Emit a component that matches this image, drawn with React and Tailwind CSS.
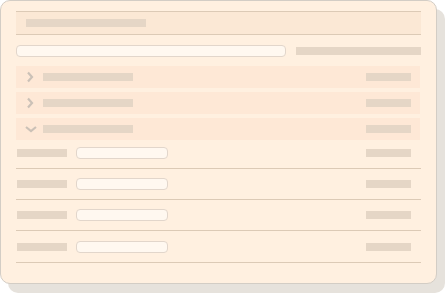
import React from "react";

const Bar = ({ className = "" }) => (
  <div className={`h-[8px] bg-[#e5d6c6] ${className}`} />
);

const ChevronRight = () => (
  <svg width="8" height="12" viewBox="0 0 8 12" fill="none">
    <path d="M2 1.5 L6 6 L2 10.5" stroke="#cbc1b7" strokeWidth="2.2" />
  </svg>
);

const ChevronDown = () => (
  <svg width="12" height="8" viewBox="0 0 12 8" fill="none">
    <path d="M1 2 L6 6 L11 2" stroke="#cbc1b7" strokeWidth="2.2" />
  </svg>
);

const App = () => {
  const sections = [{ open: false }, { open: false }, { open: true }];
  const rows = [1, 2, 3, 4];

  return (
    <div className="w-[445px] h-[293px] bg-white font-['Liberation_Sans',sans-serif]">
      <div className="w-[437px] h-[284px] rounded-[10px] border border-[#d3cdc5] bg-[#fff0e0] pt-[10px] px-[15px] shadow-[8px_9px_0_#e6e2dc]">
        {/* Header */}
        <div className="h-[24px] border-y border-[#dccab6] bg-[#fbe8d5] flex items-center pl-[10px]">
          <Bar className="w-[120px]" />
        </div>

        {/* Search row */}
        <div className="mt-[10px] flex items-center">
          <div className="w-[270px] h-[12px] rounded-[4px] border border-[#e2d6cb] bg-[#fff8f0]" />
          <Bar className="flex-1 ml-[10px]" />
        </div>

        {/* Accordion */}
        <div className="mt-[9px] flex flex-col gap-[4px] pr-[1px]">
          {sections.map((s, i) => (
            <div
              key={i}
              className="h-[22px] bg-[#fee8d6] flex items-center pl-[9px] pr-[9px]"
            >
              <div className="w-[18px] flex items-center justify-start">
                {s.open ? <ChevronDown /> : <span className="ml-[1px] flex"><ChevronRight /></span>}
              </div>
              <Bar className="w-[90px]" />
              <Bar className="w-[45px] ml-auto" />
            </div>
          ))}
        </div>

        {/* Table rows */}
        <div className="-mt-[2px]">
          {rows.map((r) => (
            <div
              key={r}
              className={`${r === 4 ? "h-[32px]" : "h-[31px]"} border-b border-[#dccab6] flex items-center pl-[1px] pr-[10px]`}
            >
              <Bar className="w-[50px]" />
              <div className="ml-[9px] w-[92px] h-[12px] rounded-[4px] border border-[#e2d6cb] bg-[#fff8f0]" />
              <Bar className="w-[45px] ml-auto" />
            </div>
          ))}
        </div>
      </div>
    </div>
  );
};

export default App;
